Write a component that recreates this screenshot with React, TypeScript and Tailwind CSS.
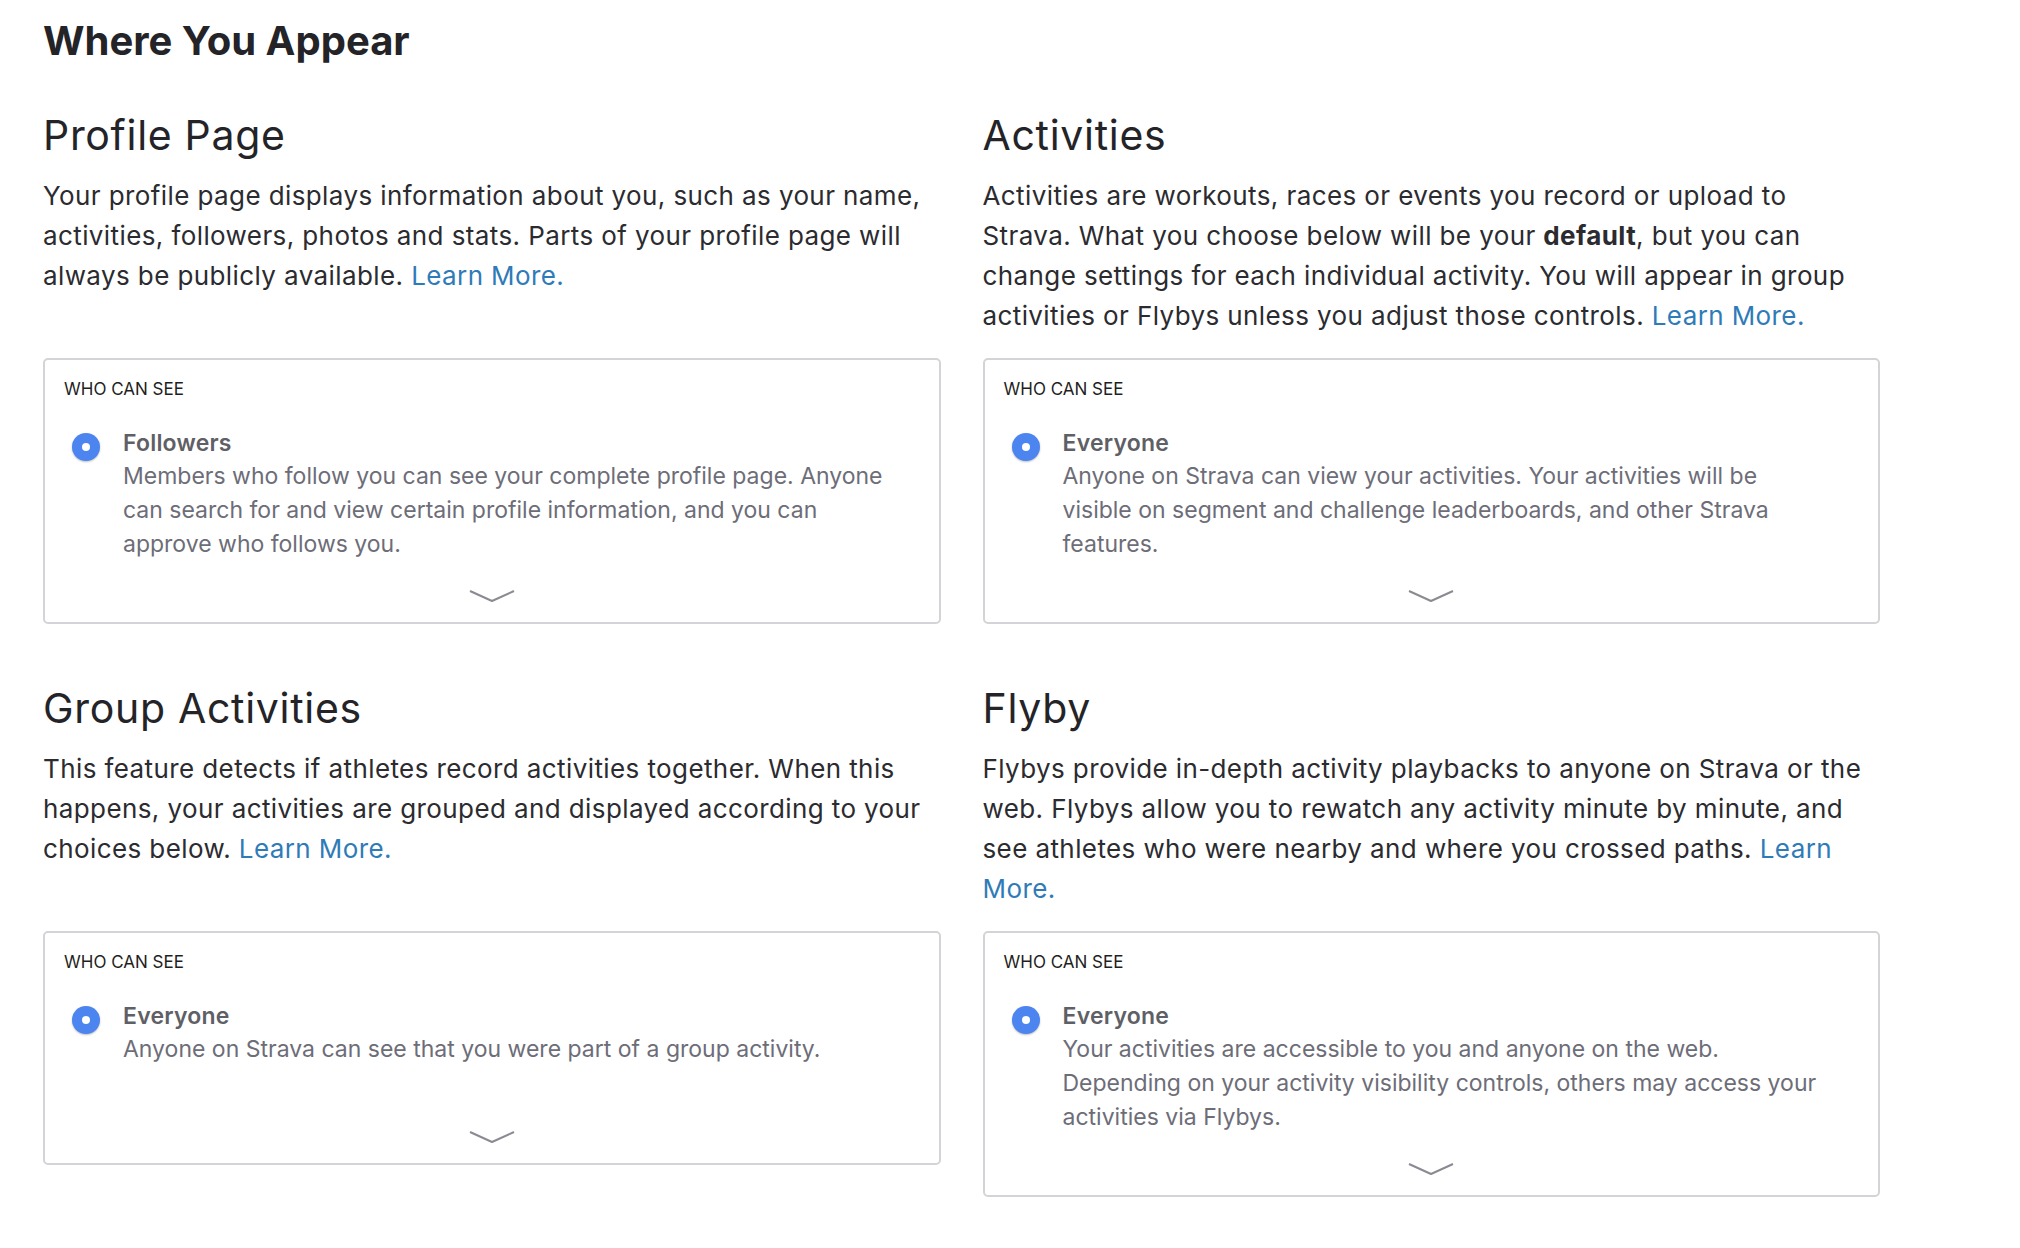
import type { ReactNode } from "react";

type Option = {
  label: string;
  description: string;
};

type Section = {
  title: string;
  body: ReactNode;
  option: Option;
};

function LearnMore() {
  return (
    <a href="#" className="text-[#2f7bb8]">
      Learn More.
    </a>
  );
}

const sections: Section[] = [
  {
    title: "Profile Page",
    body: (
      <>
        Your profile page displays information about you, such as your name, activities, followers, photos and stats.
        Parts of your profile page will always be publicly available. <LearnMore />
      </>
    ),
    option: {
      label: "Followers",
      description:
        "Members who follow you can see your complete profile page. Anyone can search for and view certain profile information, and you can approve who follows you.",
    },
  },
  {
    title: "Activities",
    body: (
      <>
        Activities are workouts, races or events you record or upload to Strava. What you choose below will be your{" "}
        <strong className="font-bold">default</strong>, but you can change settings for each individual activity. You
        will appear in group activities or Flybys unless you adjust those controls. <LearnMore />
      </>
    ),
    option: {
      label: "Everyone",
      description:
        "Anyone on Strava can view your activities. Your activities will be visible on segment and challenge leaderboards, and other Strava features.",
    },
  },
  {
    title: "Group Activities",
    body: (
      <>
        This feature detects if athletes record activities together. When this happens, your activities are grouped
        and displayed according to your choices below. <LearnMore />
      </>
    ),
    option: {
      label: "Everyone",
      description: "Anyone on Strava can see that you were part of a group activity.",
    },
  },
  {
    title: "Flyby",
    body: (
      <>
        Flybys provide in-depth activity playbacks to anyone on Strava or the web. Flybys allow you to rewatch any
        activity minute by minute, and see athletes who were nearby and where you crossed paths. <LearnMore />
      </>
    ),
    option: {
      label: "Everyone",
      description:
        "Your activities are accessible to you and anyone on the web. Depending on your activity visibility controls, others may access your activities via Flybys.",
    },
  },
];

function Chevron() {
  return (
    <svg width="46" height="12" viewBox="0 0 46 12" fill="none" aria-hidden="true">
      <polyline points="1,1 23,11 45,1" stroke="#8a8a92" strokeWidth="2" strokeLinejoin="round" />
    </svg>
  );
}

function VisibilityCard({ option }: { option: Option }) {
  return (
    <div className="rounded-[5px] border-2 border-[#d4d4d8] bg-white px-[19px] pt-[17px] pb-[20px]">
      <div className="text-[17px] leading-6 uppercase text-[#1f1f23]">Who can see</div>
      <div className="mt-[26px] flex gap-[23px] pl-[8px]">
        <span className="mt-[6px] flex h-[28px] w-[28px] shrink-0 items-center justify-center rounded-full bg-[#4c84f0] shadow-[0_1px_2px_rgba(0,0,0,0.25)]">
          <span className="h-[8px] w-[8px] rounded-full bg-white" />
        </span>
        <div className="min-h-[102px] pr-[31px]">
          <div className="text-[23px] leading-[32px] font-semibold tracking-[0.2px] text-[#5f5f66]">{option.label}</div>
          <p className="text-[23px] leading-[34px] text-[#6d6d78]">{option.description}</p>
        </div>
      </div>
      <div className="mt-[29px] flex justify-center">
        <Chevron />
      </div>
    </div>
  );
}

export default function App() {
  return (
    <div className="min-h-screen bg-white pl-[43px] pt-[17px] font-['Inter',sans-serif] text-[#2b2b30]">
      <h1 className="text-[40px] leading-[48px] font-bold text-[#242428]">Where You Appear</h1>
      <div className="mt-[46px] grid w-[1837px] grid-cols-2 gap-x-[42px]">
        {[0, 2].map((start, row) => (
          <div key={start} className={`col-span-2 grid grid-cols-2 gap-x-[42px] ${row === 1 ? "mt-[60px]" : ""}`}>
            {sections.slice(start, start + 2).map((s) => (
              <div key={s.title}>
                <h2 className="text-[41px] leading-[48px] font-normal tracking-[0.7px] text-[#242428]">{s.title}</h2>
                <p className="mt-[17px] text-[26px] leading-[40px] tracking-[0.4px] text-[#2b2b30]">{s.body}</p>
              </div>
            ))}
            {sections.slice(start, start + 2).map((s) => (
              <div key={s.title + "-card"} className="mt-[22px] self-start">
                <VisibilityCard option={s.option} />
              </div>
            ))}
          </div>
        ))}
      </div>
    </div>
  );
}
